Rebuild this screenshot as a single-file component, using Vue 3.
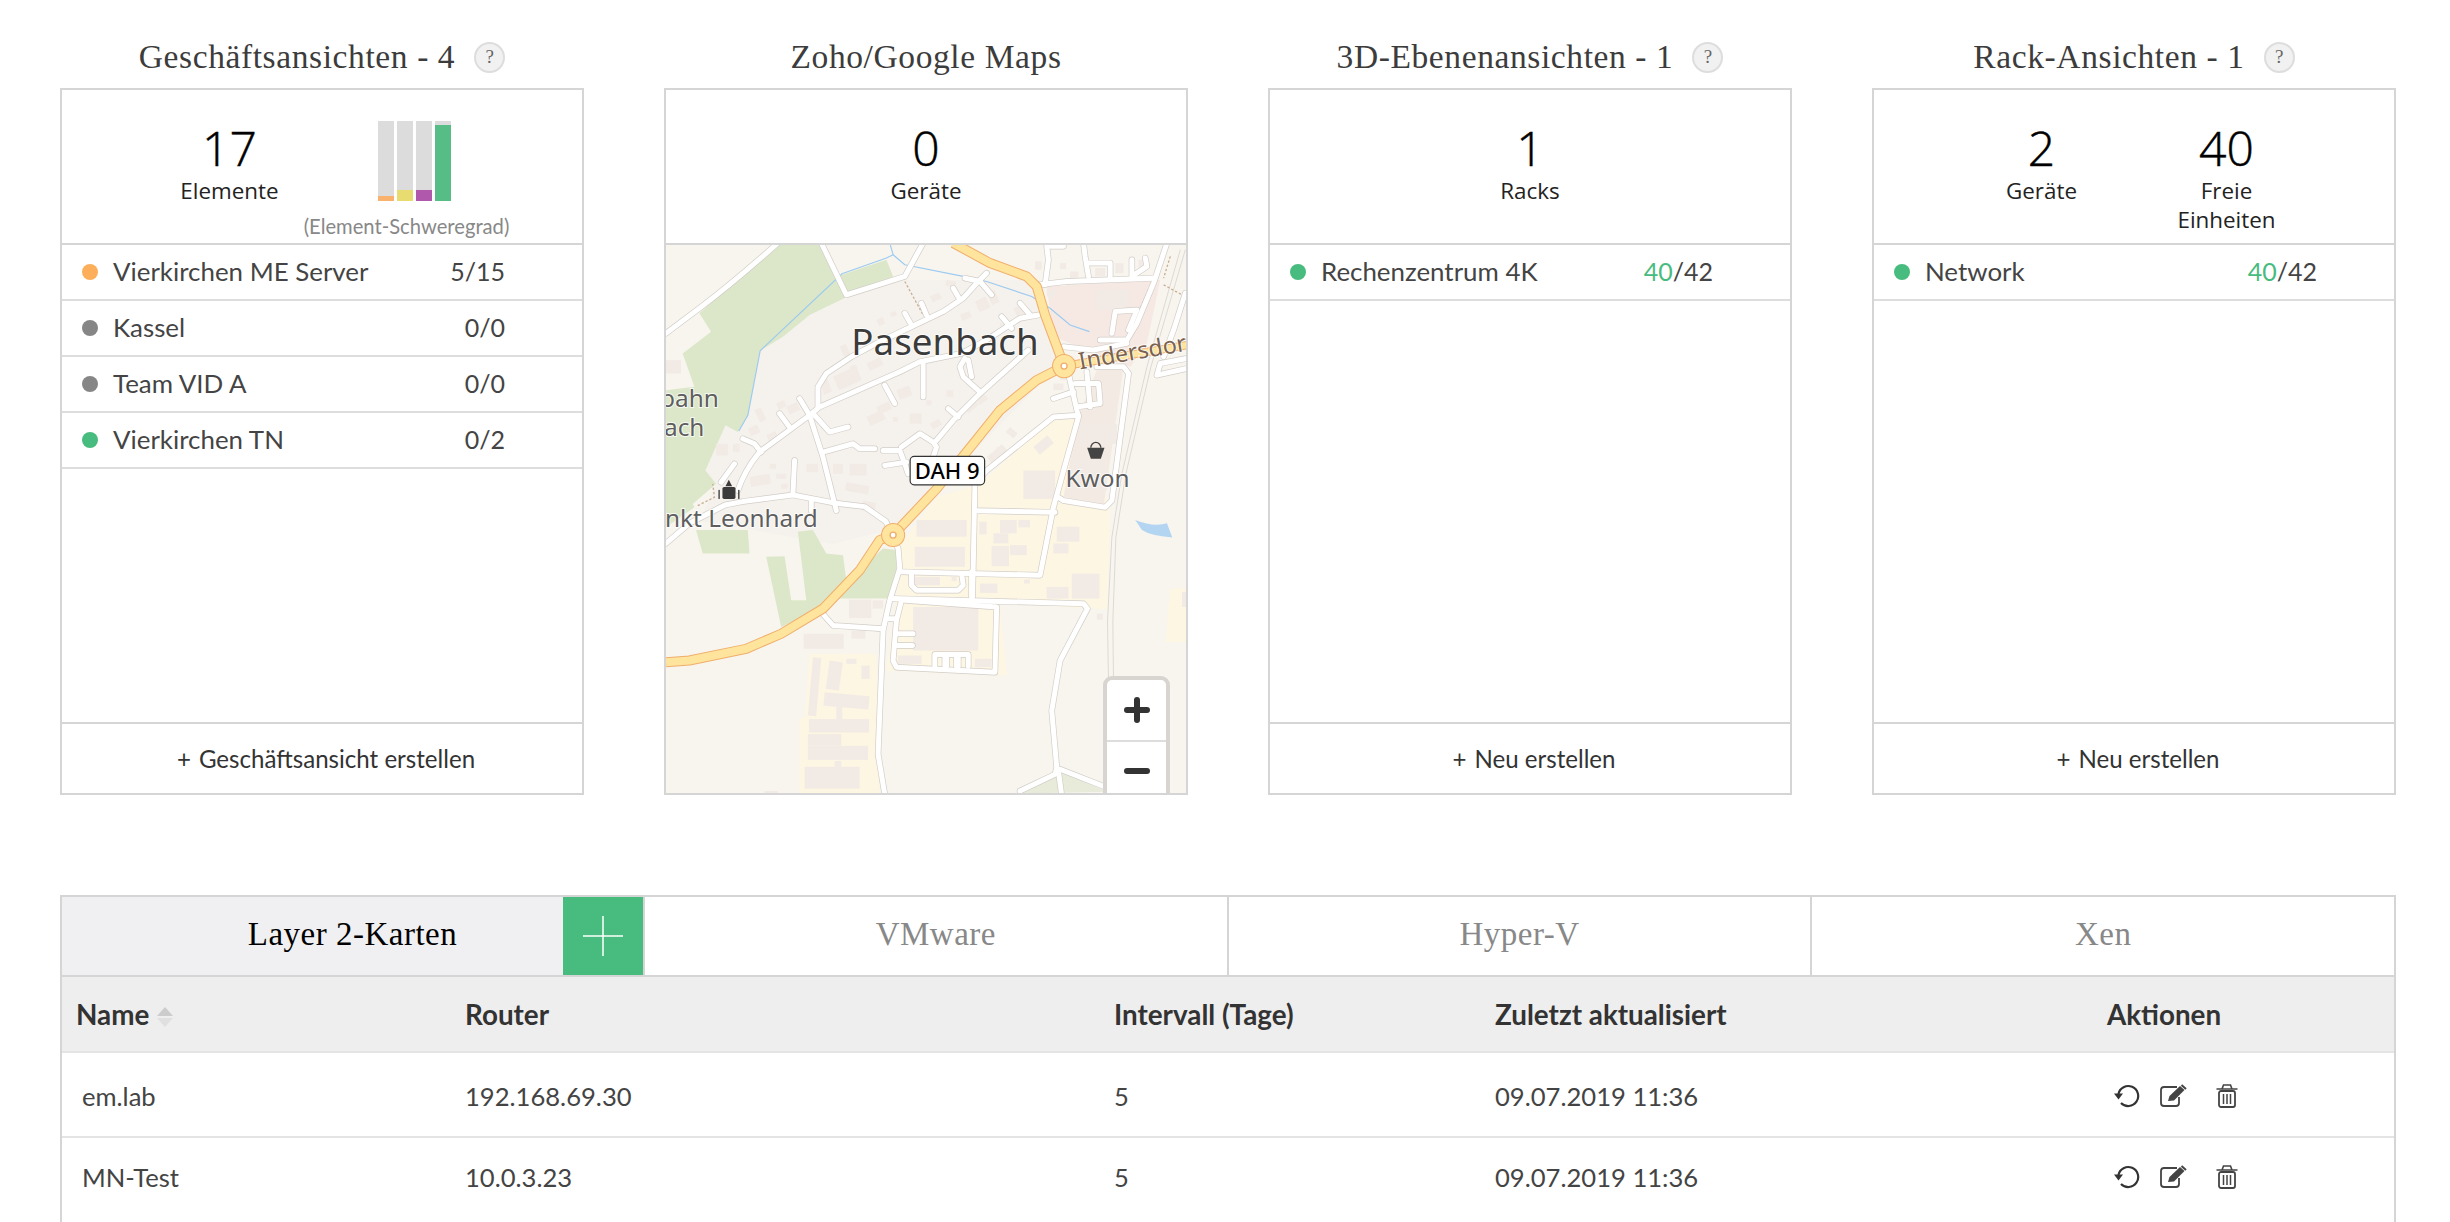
<template>
  <div class="page">
    <div class="cards">
      <section v-for="card in cards" :key="card.title" class="col">
        <div class="title-row">
          <h2 class="title">{{ card.title }}</h2>
          <span v-if="card.help" class="help">?</span>
        </div>
        <div class="card">
          <div class="card-head">
            <div v-for="stat in card.stats" :key="stat.label" class="stat">
              <div class="stat-num">{{ stat.value }}</div>
              <div class="stat-label" v-html="stat.label"></div>
            </div>
            <div v-if="card.chart" class="stat">
              <div class="bars">
                <div v-for="bar in severity" :key="bar.color" class="bar">
                  <div class="bar-fill" :style="{ height: bar.h + 'px', background: bar.color }"></div>
                </div>
              </div>
              <div class="bars-caption">(Element-Schweregrad)</div>
            </div>
          </div>

          <div v-if="card.map" class="map">
            <svg class="map-svg" viewBox="0 6 1557 1638" preserveAspectRatio="none">
              <rect x="0" y="0" width="1560" height="1650" fill="#f8f5ef" />
              <polygon v-for="(p, i) in areas" :key="'a' + i" :points="p.pts" :fill="p.fill" />
              <rect
                v-for="(b, i) in buildings"
                :key="'b' + i"
                :x="b[0]"
                :y="b[1]"
                :width="b[2]"
                :height="b[3]"
                :transform="b[4] ? `rotate(${b[4]} ${b[0]} ${b[1]})` : null"
                fill="#f2ebe5"
              />
              <path d="M1405 828Q1460 850 1500 838L1516 880Q1450 875 1425 858Z" fill="#b4d5f2" />
              <g fill="none" stroke="#cfcbc6" stroke-width="2">
                <path d="M1540 20L1440 370L1365 690L1335 880L1322 1130L1325 1320" />
                <path d="M1555 20L1452 370L1377 690L1347 880L1338 1130L1340 1320" />
              </g>
              <g fill="none" stroke="#c9ae94" stroke-width="4" stroke-dasharray="7 6">
                <path d="M715 115L770 215" />
                <path d="M1490 125L1545 155" />
                <path d="M1445 140L1420 195" />
                <path d="M1510 40L1490 105" />
                <path d="M95 785L145 760L140 720" />
              </g>
              <g fill="none" stroke="#9ccaf0" stroke-width="3.5">
                <path d="M670 0L680 35L660 45L527 92L282 322L245 515L218 562" />
                <path d="M680 35L715 65L890 100L960 115L1095 160L1150 195L1210 245L1268 265" />
              </g>
              <g fill="none" stroke-linecap="round" stroke-linejoin="round">
                <path v-for="(d, i) in streets" :key="'c' + i" :d="d" stroke="#d2cdc7" stroke-width="19" />
                <path v-for="(d, i) in streets" :key="'s' + i" :d="d" stroke="#fff" stroke-width="15" />
                <path :d="highway" stroke="#f0ae6b" stroke-width="30" stroke-linecap="butt" />
                <path :d="eastRoad" stroke="#f0ae6b" stroke-width="25" stroke-linecap="butt" />
                <path :d="highway" stroke="#fee49d" stroke-width="24" stroke-linecap="butt" />
                <path :d="eastRoad" stroke="#fee49d" stroke-width="19" stroke-linecap="butt" />
              </g>
              <g v-for="r in roundabouts" :key="r[0]">
                <circle :cx="r[0]" :cy="r[1]" r="36" fill="#f0ae6b" />
                <circle :cx="r[0]" :cy="r[1]" r="33" fill="#fee49d" />
                <circle :cx="r[0]" :cy="r[1]" r="9" fill="#fff" stroke="#f0ae6b" stroke-width="4" />
              </g>

              <g class="label">
                <text x="555" y="335" class="l-town">Pasenbach</text>
                <text x="-18" y="490" class="l-small">bahn</text>
                <text x="-6" y="578" class="l-small">ach</text>
                <text x="-3" y="848" class="l-small">nkt Leonhard</text>
                <text x="1196" y="728" class="l-small">Kwon</text>
                <text x="1240" y="378" transform="rotate(-10 1240 378)" class="l-road">Indersdorf</text>
              </g>

              <path d="M1272 612a15 16 0 0 1 30 0" fill="none" stroke="#444" stroke-width="4" />
              <path d="M1261 612H1313L1302 645H1272Z" fill="#444" />
              <path d="M188 708L198 727H178Z" fill="#3b3b3b" />
              <rect x="169" y="729" width="39" height="36" rx="5" fill="#3b3b3b" />
              <rect x="157" y="738" width="4" height="27" fill="#3b3b3b" />
              <rect x="216" y="738" width="4" height="27" fill="#3b3b3b" />

              <rect x="731" y="638" width="223" height="85" rx="12" fill="#fff" stroke="#333" stroke-width="3.5" />
              <text x="842" y="705" class="l-badge">DAH 9</text>
            </svg>
            <div class="zoom-ctl">
              <button type="button" class="zoom-btn">
                <svg width="26" height="26" viewBox="0 0 26 26"><path d="M13 3V23M3 13H23" stroke="#333" stroke-width="6" stroke-linecap="round" /></svg>
              </button>
              <button type="button" class="zoom-btn zoom-minus">
                <svg width="26" height="26" viewBox="0 0 26 26"><path d="M3 13H23" stroke="#333" stroke-width="6" stroke-linecap="round" /></svg>
              </button>
            </div>
          </div>

          <template v-else>
            <div class="rows">
              <div v-for="row in card.rows" :key="row.name" class="row">
                <span class="dot" :style="{ background: row.color }"></span>
                <span class="row-name">{{ row.name }}</span>
                <span class="row-val"><em v-if="row.free" class="free">{{ row.free }}</em>{{ row.val }}</span>
              </div>
            </div>
            <div class="card-foot"><span class="plus">+</span>{{ card.action }}</div>
          </template>
        </div>
      </section>
    </div>

    <div class="panel">
      <div class="tabs">
        <div class="tab tab-active">
          Layer 2-Karten
          <button type="button" class="tab-add">
            <svg width="40" height="40" viewBox="0 0 40 40"><path d="M20 0V40M0 20H40" stroke="#fff" stroke-width="1.5" /></svg>
          </button>
        </div>
        <div class="tab">VMware</div>
        <div class="tab">Hyper-V</div>
        <div class="tab">Xen</div>
      </div>
      <div class="thead grid">
        <div class="name-head">Name
          <span class="sort"><i class="up"></i><i class="down"></i></span>
        </div>
        <div>Router</div>
        <div>Intervall (Tage)</div>
        <div>Zuletzt aktualisiert</div>
        <div class="center">Aktionen</div>
      </div>
      <div v-for="item in maps" :key="item.name" class="trow grid">
        <div class="name-cell">{{ item.name }}</div>
        <div>{{ item.router }}</div>
        <div>{{ item.interval }}</div>
        <div>{{ item.updated }}</div>
        <div class="actions">
          <svg width="26" height="26" viewBox="0 0 26 26">
            <path d="M7 20A10 10 0 1 0 4.4 11" fill="none" stroke="#333" stroke-width="2.2" />
            <path d="M0 10.5H9L4.5 16.5Z" fill="#333" />
          </svg>
          <svg class="act-edit" width="28" height="24" viewBox="0 0 28 24">
            <path d="M18 3H5Q2 3 2 6V19Q2 22 5 22H17Q20 22 20 19V13" fill="none" stroke="#444" stroke-width="1.8" />
            <path d="M9 17L10.5 12L21 2L25.5 6L15 16.5Z" fill="#444" />
            <path d="M22.5 1L27 5" stroke="#444" stroke-width="2" />
          </svg>
          <svg class="act-trash" width="22" height="24" viewBox="0 0 22 24">
            <path d="M0.5 5H21.5M6 5L7.5 1H14.5L16 5" fill="none" stroke="#444" stroke-width="1.6" />
            <rect x="3" y="7" width="16" height="16" rx="2" fill="none" stroke="#444" stroke-width="1.8" />
            <path d="M7.5 10V20M11 10V20M14.5 10V20" stroke="#444" stroke-width="1.5" />
          </svg>
        </div>
      </div>
    </div>
  </div>
</template>

<script setup>
const GREEN = '#48bb7e'
const GREY = '#868686'

const severity = [
  { h: 5, color: '#f8b26d' },
  { h: 11, color: '#e8dc70' },
  { h: 11, color: '#b058ac' },
  { h: 76, color: '#55bd85' },
]

const cards = [
  {
    title: 'Geschäftsansichten - 4',
    help: true,
    chart: true,
    stats: [{ value: 17, label: 'Elemente' }],
    rows: [
      { name: 'Vierkirchen ME Server', val: '5/15', color: '#fcae5a' },
      { name: 'Kassel', val: '0/0', color: GREY },
      { name: 'Team VID A', val: '0/0', color: GREY },
      { name: 'Vierkirchen TN', val: '0/2', color: GREEN },
    ],
    action: 'Geschäftsansicht erstellen',
  },
  {
    title: 'Zoho/Google Maps',
    map: true,
    stats: [{ value: 0, label: 'Geräte' }],
  },
  {
    title: '3D-Ebenenansichten - 1',
    help: true,
    stats: [{ value: 1, label: 'Racks' }],
    rows: [{ name: 'Rechenzentrum 4K', free: '40', val: '/42', color: GREEN }],
    action: 'Neu erstellen',
  },
  {
    title: 'Rack-Ansichten - 1',
    help: true,
    stats: [
      { value: 2, label: 'Geräte' },
      { value: 40, label: 'Freie<br>Einheiten' },
    ],
    rows: [{ name: 'Network', free: '40', val: '/42', color: GREEN }],
    action: 'Neu erstellen',
  },
]

const maps = [
  { name: 'em.lab', router: '192.168.69.30', interval: 5, updated: '09.07.2019 11:36' },
  { name: 'MN-Test', router: '10.0.3.23', interval: 5, updated: '09.07.2019 11:36' },
]

// map coordinates are 3x the screen pixels
const highway = 'M860 0L970 60L1080 100L1110 130L1135 215L1192 368L1110 410L1000 500L920 600L810 735L680 873L640 888L580 978L470 1093L345 1168L240 1213L70 1248L0 1253'
const eastRoad = 'M1192 368L1560 305'
const roundabouts = [[1192, 368], [680, 873]]

const areas = [
  { fill: '#f5f1ec', pts: '540,165 700,110 1120,110 1180,360 700,850 500,900 100,830 150,720 118,680 178,545 245,515 282,322 430,215' },
  { fill: '#dbe7c8', pts: '100,210 330,6 465,6 510,100 527,95 660,50 680,100 545,160 430,215 350,280 282,322 245,515 215,565 178,545 118,680 150,720 80,780 85,790 0,850 0,440 85,430 50,330 135,265' },
  { fill: '#dbe7c8', pts: '90,858 110,928 250,928 245,858' },
  { fill: '#dbe7c8', pts: '300,938 345,1148 470,1088 540,1008 530,933 480,928 440,858 395,863 420,1068 375,1068 355,936' },
  { fill: '#dbe7c8', pts: '690,918 690,978 670,1063 520,1063 570,988 650,913' },
  { fill: '#fdf6e3', pts: '1160,525 1240,525 1330,800 1320,1095 1000,1078 1020,1293 660,1278 690,1068 705,900 810,760 940,720' },
  { fill: '#fdf6e3', pts: '430,1228 630,1228 640,1646 400,1646 400,1418 415,1418' },
  { fill: '#fdf6e3', pts: '1510,1033 1560,1033 1560,1193 1495,1193' },
  { fill: '#f6e9e4', pts: '1140,130 1480,110 1440,300 1390,370 1160,280' },
  { fill: '#f3eae4', pts: '1235,520 1290,380 1370,370 1310,790 1190,760' },
  { fill: '#e8ebda', pts: '1180,1580 1320,1640 1060,1646' },
]

const buildings = [
  [750, 828, 150, 50], [745, 908, 150, 60], [938, 833, 22, 38], [1000, 828, 50, 40], [980, 868, 45, 30],
  [1055, 828, 35, 22], [975, 906, 52, 60], [1030, 903, 50, 30], [1170, 848, 68, 45], [1160, 898, 45, 30],
  [1215, 988, 83, 75], [1140, 1028, 65, 35], [940, 1018, 52, 28], [1072, 1006, 18, 12], [548, 1066, 67, 55],
  [618, 1068, 32, 25], [412, 1168, 120, 45], [555, 1158, 42, 25], [740, 1088, 195, 130], [695, 1233, 70, 25],
  [925, 1243, 50, 25], [440, 1238, 25, 175, 5], [490, 1248, 40, 85, 8], [540, 1243, 30, 15], [585, 1263, 25, 40],
  [475, 1343, 135, 40, 5], [428, 1423, 180, 40], [425, 1468, 100, 35], [425, 1503, 180, 42], [415, 1566, 165, 65],
  [510, 1378, 18, 45], [505, 1548, 20, 18], [1290, 1108, 18, 18], [1545, 1043, 15, 45], [745, 998, 75, 25],
  [855, 998, 15, 12], [295, 1638, 40, 8],
  [500, 400, 60, 45, -25], [600, 360, 45, 25, -25], [520, 310, 20, 35, -25], [630, 230, 20, 20, -25], [670, 210, 18, 14, -25],
  [790, 160, 30, 20, -25], [840, 110, 30, 18, 10], [925, 175, 35, 35, -25], [960, 150, 25, 40, -25], [880, 215, 30, 20, -25],
  [1040, 195, 30, 30, -25], [1000, 240, 20, 20], [1140, 140, 25, 20], [1180, 60, 18, 18], [1210, 85, 25, 20], [1285, 75, 30, 25],
  [1105, 55, 20, 25], [1345, 60, 25, 30], [1415, 50, 20, 35], [600, 520, 50, 30, -25], [630, 490, 40, 25, -25],
  [690, 440, 40, 30, -20], [730, 510, 35, 30], [680, 520, 14, 14], [790, 540, 30, 20, -30], [890, 490, 40, 25, -40],
  [925, 465, 30, 25, -40], [840, 440, 20, 20], [780, 470, 15, 15], [550, 370, 20, 50, -20], [460, 415, 25, 40, -20],
  [330, 480, 25, 20, -25], [360, 490, 35, 25, -25], [265, 500, 20, 40, -25], [245, 555, 30, 25, -25], [300, 575, 30, 30, -25],
  [150, 600, 35, 35], [200, 600, 20, 25], [310, 660, 20, 15], [250, 700, 60, 30, -10], [330, 690, 30, 15], [345, 720, 20, 15],
  [420, 660, 35, 25], [550, 660, 50, 35], [500, 660, 30, 30], [540, 715, 70, 25, 10], [590, 770, 40, 30, 10], [0, 350, 45, 40],
  [960, 640, 60, 25, -40], [1030, 550, 30, 20, 40], [990, 610, 20, 20], [1100, 610, 55, 30, -40], [1070, 680, 95, 85],
  [1240, 540, 110, 60], [1220, 650, 100, 90], [1180, 380, 30, 30], [1160, 420, 30, 20], [1290, 140, 95, 60],
]

const streets = [
  'M335 0Q200 120 100 195L0 270',
  'M465 0L540 155L715 100L770 0',
  'M960 90L935 115L890 165L830 205L630 300L555 340L480 390L455 430L455 490',
  'M1115 215L1060 225L960 290L885 330L760 355L700 385L460 490L430 515L280 625Q235 680 215 740',
  'M0 898L70 838L177 783L230 773L380 753L509 778L595 788L659 833L695 913L700 973L670 1068L650 1158L635 1528L655 1648',
  'M400 465L430 515L470 640L510 800',
  'M445 515L490 565L545 550',
  'M470 625L560 600L580 615L625 615',
  'M650 620L700 620L715 660L725 690',
  'M655 665L720 655',
  'M705 610L760 570L800 595L810 610L800 640',
  'M1085 320L940 450L860 530L810 590',
  'M845 495L875 520',
  'M940 445L890 400L880 370L895 345',
  'M915 400L905 350',
  'M860 135L880 170',
  'M765 180L780 215',
  'M715 210L735 245',
  'M1005 220L1035 255',
  'M1060 180L1090 215',
  'M895 105L940 115L975 155',
  'M340 510L370 550',
  'M230 585L265 600L285 625',
  'M205 660L165 715',
  'M385 650L380 750',
  'M770 355L770 460',
  'M655 425L685 480',
  'M435 765L435 800',
  'M1115 125L1200 115L1460 105',
  'M1135 125L1145 50L1140 10L1190 10',
  'M1265 100L1255 40L1250 0',
  'M1265 60L1330 60L1330 100',
  'M1395 100L1395 50M1395 100L1440 70L1435 45',
  'M1500 0L1460 120L1410 240L1380 290L1300 290',
  'M1335 270L1345 205L1410 200L1385 260',
  'M1190 310L1280 320L1380 300',
  'M1555 150L1520 260L1490 340',
  'M1470 395L1560 375M1470 395L1480 360L1560 345',
  'M1205 390L1235 520L1160 790L1120 993L700 983',
  'M1235 515L1160 520L960 680L925 720L918 1058',
  'M925 800L1165 805',
  'M1290 370L1370 370L1385 390L1335 770L1315 790L1190 770L1175 760',
  'M1160 465L1220 445',
  'M1225 420L1295 420L1300 480L1230 490',
  'M1260 385L1270 490',
  'M460 1098L500 1143L650 1153',
  'M735 988L735 1023L750 1038L875 1038L890 1023L885 988',
  'M680 1063L1250 1078L1262 1093L1180 1248L1155 1398L1170 1568L1165 1588L1060 1638',
  'M1180 1573L1320 1628',
  'M1175 1578L1185 1653',
  'M705 1068L690 1128L680 1248L690 1268L985 1283L990 1088L715 1068',
  'M660 1123L690 1123',
  'M695 1168L740 1168',
  'M690 1203L738 1203',
  'M805 1265L805 1230L835 1230L835 1265M840 1265L840 1230L870 1230L870 1265M875 1265L875 1230L905 1230L905 1265',
  'M915 983L915 1058',
]
</script>

<style>
html,
body {
  margin: 0;
  overflow: hidden;
  background: #fff;
}
</style>

<style scoped>
.page {
  width: 2450px;
  height: 1222px;
  box-sizing: border-box;
  padding: 0 54px 0 60px;
  font-family: Lato, "Liberation Sans", sans-serif;
  color: #444;
  overflow: hidden;
}
.cards {
  display: grid;
  grid-template-columns: repeat(4, 524px);
  column-gap: 80px;
}
.title-row {
  height: 88px;
  padding-top: 26px;
  box-sizing: border-box;
  display: flex;
  align-items: center;
  justify-content: center;
  gap: 19px;
}
.title {
  margin: 0;
  font-family: "Liberation Serif", serif;
  font-size: 33.5px;
  font-weight: 400;
  letter-spacing: 0.6px;
  color: #3c3c3c;
}
.help {
  width: 31px;
  height: 31px;
  box-sizing: border-box;
  border: 2px solid #ddd;
  border-radius: 50%;
  background: #f1f1f1;
  color: #666;
  font-family: "Liberation Serif", serif;
  font-size: 19px;
  line-height: 25px;
  text-align: center;
}
.card {
  height: 707px;
  box-sizing: border-box;
  border: 2px solid #d5d5d5;
  display: flex;
  flex-direction: column;
}
.card-head {
  height: 155px;
  flex: none;
  box-sizing: border-box;
  border-bottom: 2px solid #d5d5d5;
  padding-top: 30px;
  display: flex;
  justify-content: center;
}
.stat {
  width: 185px;
  text-align: center;
}
.stat-num {
  font-family: "Open Sans", sans-serif;
  font-weight: 300;
  font-size: 48px;
  line-height: 56px;
  color: #000;
  -webkit-text-stroke: 0.5px #000;
}
.stat-label {
  font-family: "Open Sans", sans-serif;
  font-size: 22.4px;
  line-height: 29px;
  color: #222;
}
.bars {
  height: 80px;
  margin-top: 1px;
  display: flex;
  justify-content: center;
  gap: 3.3px;
}
.bar {
  width: 16px;
  background: #dcdcdc;
  display: flex;
  align-items: flex-end;
}
.bar-fill {
  width: 100%;
}
.bars-caption {
  margin: 13px -22px 0 -38px;
  font-size: 20.2px;
  line-height: 24px;
  color: #888;
  white-space: nowrap;
}
.rows {
  flex: 1;
}
.row {
  height: 56px;
  box-sizing: border-box;
  border-bottom: 2px solid #ddd;
  padding: 0 77px 3px 20px;
  display: flex;
  align-items: center;
  font-size: 25.9px;
}
.dot {
  width: 16px;
  height: 16px;
  border-radius: 50%;
  margin: 3px 15px 0 0;
  flex: none;
}
.row-name {
  flex: 1;
}
.row-val {
  font-size: 25px;
}
.free {
  font-style: normal;
  color: #48bb7e;
}
.card-foot {
  height: 71px;
  flex: none;
  box-sizing: border-box;
  border-top: 2px solid #d5d5d5;
  padding-left: 8px;
  display: flex;
  align-items: center;
  justify-content: center;
  font-size: 24.1px;
  color: #333;
}
.plus {
  margin-right: 8px;
}
.map {
  flex: 1;
  position: relative;
  overflow: hidden;
}
.map-svg {
  display: block;
  width: 100%;
  height: 100%;
}
.label text {
  font-family: "Noto Sans", sans-serif;
  paint-order: stroke;
  stroke: rgba(255, 255, 255, 0.75);
  stroke-width: 6px;
}
.l-town {
  font-size: 110px;
  fill: #3b3b3b;
}
.l-small {
  font-size: 73px;
  fill: #5e5e5e;
}
.l-road {
  font-size: 70px;
  fill: #7a6250;
}
.l-badge {
  font-family: "Noto Sans", sans-serif;
  font-size: 66px;
  font-weight: 500;
  text-anchor: middle;
  fill: #000;
}
.zoom-ctl {
  position: absolute;
  top: 431px;
  right: 16px;
  width: 67px;
  box-sizing: border-box;
  border: 4px solid #d8d4d0;
  border-radius: 9px;
  background: #fff;
}
.zoom-btn {
  display: flex;
  align-items: center;
  justify-content: center;
  width: 100%;
  height: 60px;
  padding: 0;
  border: 0;
  background: none;
}
.zoom-minus {
  border-top: 2px solid #ddd;
}
.panel {
  margin-top: 100px;
  border: solid #d5d5d5;
  border-width: 2px 2px 0;
  height: 327px;
}
.tabs {
  height: 80px;
  box-sizing: border-box;
  display: flex;
  border-bottom: 2px solid #d5d5d5;
  font-family: "Liberation Serif", serif;
  font-size: 33px;
  letter-spacing: 0.5px;
  color: #888;
}
.tab {
  flex: 1;
  position: relative;
  display: flex;
  align-items: center;
  justify-content: center;
  padding-bottom: 3px;
  border-left: 2px solid #d5d5d5;
}
.tab-active {
  flex: none;
  width: 581px;
  background: #f0f0f2;
  color: #000;
  border-left: 0;
}
.tab-add {
  position: absolute;
  top: 0;
  right: 0;
  bottom: 0;
  width: 80px;
  display: flex;
  align-items: center;
  justify-content: center;
  padding: 0;
  border: 0;
  background: #48bb7e;
}
.grid {
  display: grid;
  grid-template-columns: 403px 649px 381px 439px 460px;
  align-items: center;
}
.thead {
  height: 76px;
  box-sizing: border-box;
  background: #eee;
  border-bottom: 2px solid #e4e4e4;
  font-size: 27.8px;
  font-weight: 700;
  color: #333;
}
.name-head {
  padding-left: 14px;
  display: flex;
  align-items: center;
  gap: 8px;
}
.sort {
  display: flex;
  flex-direction: column;
  gap: 2px;
  margin-top: 6px;
}
.sort i {
  width: 0;
  height: 0;
  border-left: 8px solid transparent;
  border-right: 8px solid transparent;
}
.up {
  border-bottom: 9px solid #ccc;
}
.down {
  border-top: 9px solid #e0e0e0;
}
.center {
  text-align: center;
}
.trow {
  height: 85px;
  box-sizing: border-box;
  border-bottom: 2px solid #e4e4e4;
  font-size: 25.6px;
  padding-top: 3px;
}
.trow:last-child {
  padding-top: 0;
  padding-bottom: 7px;
  border-bottom: 0;
}
.name-cell {
  padding-left: 20px;
}
.actions {
  display: flex;
  align-items: center;
  padding-left: 180px;
}
.act-edit {
  margin-left: 19px;
}
.act-trash {
  margin-left: 29px;
}
</style>
